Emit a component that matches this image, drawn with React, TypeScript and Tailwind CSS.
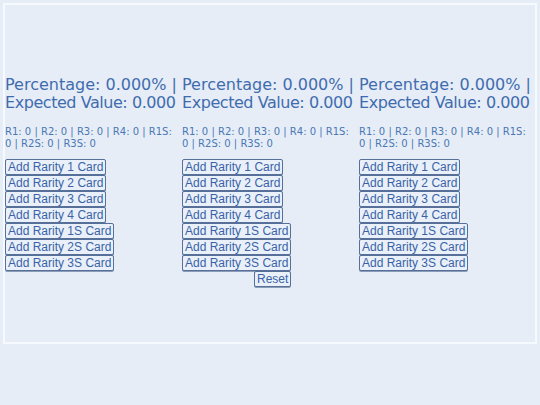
import React from "react";

const labels = ["1", "2", "3", "4", "1S", "2S", "3S"];

function Btn({ children, className = "" }: { children: React.ReactNode; className?: string }) {
  return (
    <button
      className={
        "block border border-[#56709a] rounded-[2px] bg-[#e9f0f9] text-[#3a63a6] text-[12px] leading-[14px] px-[2px] shadow-[0_1px_0_#8a9cb8] " +
        className
      }
      style={{ fontFamily: '"Liberation Sans", Arial, sans-serif' }}
    >
      {children}
    </button>
  );
}

function Column({ reset }: { reset?: boolean }) {
  return (
    <div className="flex flex-col" style={{ fontFamily: '"DejaVu Sans", Verdana, sans-serif' }}>
      <div className="text-[16px] leading-[18px] text-[#3f6cae]">
        Percentage: 0.000% |{" "}
        <span className="whitespace-nowrap tracking-[-0.45px]">Expected Value: 0.000</span>
      </div>
      <div className="mt-[14px] text-[10px] leading-[12px] text-[#4a78b4] whitespace-nowrap">
        R1: 0 | R2: 0 | R3: 0 | R4: 0 | R1S:
        <br />0 | R2S: 0 | R3S: 0
      </div>
      <div className="mt-[9px] inline-flex flex-col items-start self-start">
        {labels.map((l) => (
          <Btn key={l}>Add Rarity {l} Card</Btn>
        ))}
        {reset && <Btn className="self-end">Reset</Btn>}
      </div>
    </div>
  );
}

export default function App() {
  return (
    <div className="w-[540px] h-[405px] bg-[#e6edf7] pt-[3px] pl-[3px]">
      <div className="w-[534px] h-[341px] border-2 border-[#f6f9fd] pt-[71px]">
        <div className="grid grid-cols-3 w-[531px]">
          <Column />
          <Column reset />
          <Column />
        </div>
      </div>
    </div>
  );
}
